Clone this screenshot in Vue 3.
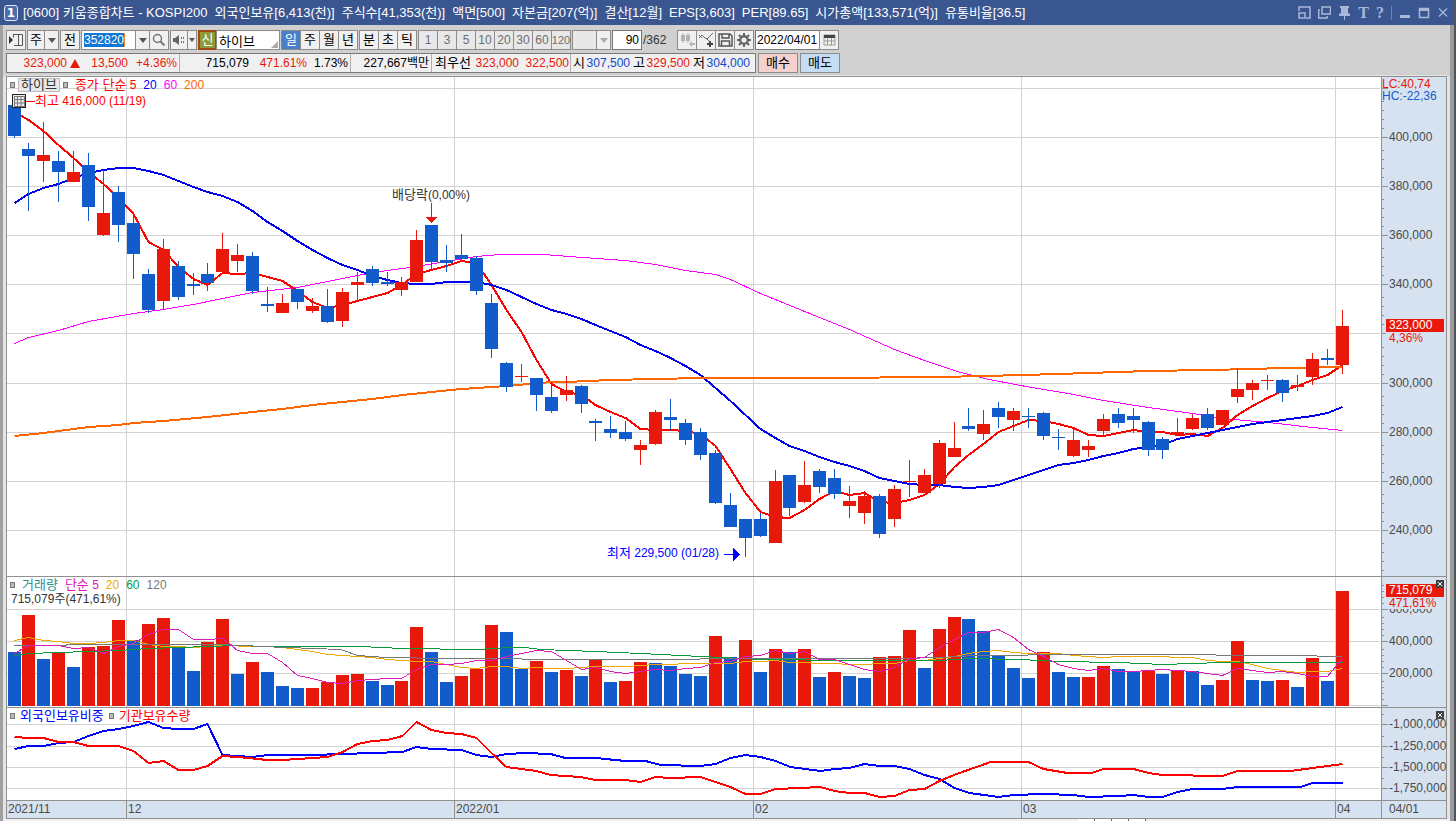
<script setup>
const N = 90
const xs = Array.from({ length: N }, (_, i) => Math.floor(14 + (i * 1328) / 89 + 0.02))

// body top, body bottom, high, low, direction
const candles = [
  [105,136,97,138,'b'],[149,156,143,211,'b'],[155,161,122,182,'r'],[161,172,151,202,'b'],[172,182,151,182,'r'],
  [165,207,153,221,'b'],[213,235,170,236,'r'],[192,225,186,242,'b'],[223,254,212,279,'b'],[274,310,269,313,'b'],
  [249,301,239,310,'r'],[266,297,261,300,'b'],[284,286,273,295,'b'],[274,283,263,291,'b'],[249,272,233,272,'r'],
  [255,261,244,272,'r'],[256,291,252,294,'b'],[304,306,287,312,'b'],[303,313,294,313,'r'],[289,302,289,309,'b'],
  [306,311,298,313,'r'],[306,322,289,323,'b'],[292,321,288,327,'r'],[282,285,272,300,'r'],[269,283,266,286,'b'],
  [282,284,272,286,'b'],[282,290,277,296,'r'],[240,282,230,282,'r'],[225,262,225,269,'b'],[260,263,245,272,'b'],
  [255,259,234,261,'b'],[258,291,256,295,'b'],[303,349,294,358,'b'],[363,387,362,392,'b'],[376,377,364,382,'r'],
  [378,395,378,411,'b'],[397,411,382,413,'b'],[390,395,376,401,'r'],[386,404,385,413,'b'],[421,423,419,441,'b'],
  [429,433,416,438,'b'],[432,439,421,441,'b'],[445,450,440,465,'r'],[412,444,410,445,'r'],[417,420,399,430,'b'],
  [423,440,419,445,'b'],[432,455,428,460,'b'],[453,503,450,504,'b'],[505,527,493,527,'b'],[519,538,519,557,'b'],
  [519,536,513,537,'b'],[481,543,470,543,'r'],[475,508,475,516,'b'],[485,502,461,503,'r'],[471,487,469,493,'b'],
  [478,494,469,499,'b'],[501,506,486,518,'r'],[496,513,491,524,'r'],[496,534,494,538,'b'],[489,519,485,527,'r'],
  [481,482,460,497,'r'],[475,493,469,493,'r'],[443,484,440,488,'r'],[448,457,422,457,'r'],[426,429,408,431,'b'],
  [424,434,410,440,'r'],[408,417,402,428,'b'],[411,420,408,431,'r'],[416,417,408,428,'b'],[413,436,412,440,'b'],
  [437,438,429,450,'b'],[440,456,429,457,'r'],[446,450,440,457,'r'],[419,431,414,435,'r'],[414,423,408,428,'b'],
  [416,420,408,433,'b'],[422,450,421,456,'b'],[439,450,437,459,'b'],[432,435,418,435,'r'],[418,429,414,430,'r'],
  [414,428,408,430,'b'],[410,425,410,425,'r'],[389,397,368,403,'r'],[383,390,380,400,'r'],[380,381,375,390,'r'],
  [380,393,379,402,'b'],[385,387,375,391,'r'],[359,377,353,385,'r'],[358,360,349,365,'b'],[326,365,310,374,'r'],
]

const volTops = [
  652,615,659,653,667,647,646,620,640,624,618,647,671,642,619,674,662,672,686,688,688,682,675,674,681,
  685,681,627,652,682,676,669,625,632,669,661,672,670,676,660,682,681,662,663,666,674,676,636,657,640,
  672,649,652,649,677,672,676,678,657,656,630,668,629,617,619,631,656,668,678,652,672,677,677,666,669,
  672,671,674,670,671,685,680,641,680,681,680,687,658,681,591,
]
const volUp = new Set([1,3,5,6,7,9,10,13,14,16,20,21,22,23,26,27,30,31,32,35,37,39,41,42,47,49,51,53,55,58,59,60,62,63,69,72,73,76,78,81,82,85,87,89])

const colour = (c) => (c === 'r' ? '#e8190a' : '#125bcb')
const closes = candles.map((c) => (c[4] === 'r' ? c[0] : c[1]))

function average(src, n) {
  const out = []
  for (let i = n - 1; i < src.length; i++) {
    let sum = 0
    for (let k = i - n + 1; k <= i; k++) sum += src[k]
    out.push([xs[i], sum / n])
  }
  return out
}
const toPoints = (pts, half = 0) => pts.map(([x, y]) => `${x + 0.5},${Math.round(y) + half}`).join(' ')
const parse = (s) => s.trim().split(/\s+/).map((p) => p.split(',').map(Number))

const ma5 = toPoints([...parse('14,112 28,120 43,131 58,145'), ...average(closes, 5)])
const ma20 = toPoints([
  ...parse('14,203 28,194 43,188 58,184 73,178 88,173 103,170 118,168 133,168 148,171 163,175 178,181 193,187 207,192 222,196 237,202 252,211 267,222 282,231'),
  ...average(closes, 20),
])
const ma60 = toPoints(parse('14,343 28,337 58,330 88,321 133,313 163,309 193,304 222,298 252,292 297,287 327,281 357,275 387,270 416,266 446,261 476,256 499,254 543,254 582,257 625,260 655,264 685,270 715,274 730,279 760,293 819,317 849,329 894,349 924,360 957,371 984,378 1020,385 1073,394 1103,400 1148,407 1192,413 1222,418 1268,422 1312,427 1342,430'), 0.5)
const ma200 = toPoints(parse('14,436 43,433 73,429 88,427 118,425 133,423 163,421 207,417 252,412 282,409 312,405 342,402 372,399 402,395 431,392 461,389 506,386 551,382 566,382 610,380 655,379 700,378 820,378 939,377 984,376 1058,374 1148,371 1207,370 1252,369 1282,368 1342,367'))

const volMa5 = toPoints([...parse('14,654 28,646 43,646 58,646'), ...average(volTops, 5)], -0.5)
const volMa20 = toPoints([
  ...parse('14,641 28,638 43,641 58,642 73,644 88,644 103,643 118,641 133,641 148,645 163,647 178,647 193,648 207,647 222,646 252,647 267,647 282,648'),
  ...average(volTops, 20),
], -0.5)
const volMa60 = toPoints(parse('14,656 28,654 58,653 88,652 118,651 148,649 178,648 207,647 237,646 267,647 360,647 402,649 476,650 510,648 525,648 540,650 595,652 640,654 700,657 760,660 850,661 939,661 970,659 1020,660 1058,662 1118,663 1162,665 1222,663 1342,663'), -0.5)
const volMa120 = toPoints(parse('14,646 118,645 222,645 260,647 340,650 357,656 386,658 446,659 595,660 655,660 745,659 900,659 939,658 975,656 1080,655 1140,655 1290,656 1342,657'), -0.5)

const foreign = toPoints(parse('14,749 28,746 43,746 58,743 73,742 88,736 103,731 118,729 133,726 148,722 163,728 178,729 193,729 207,724 222,755 237,756 252,757 267,755 312,755 342,754 402,752 416,747 431,749 461,750 476,755 491,757 506,754 525,753 550,754 565,758 595,758 625,761 645,761 660,765 700,766 715,764 730,758 745,755 760,757 775,761 790,767 820,771 834,769 849,768 864,764 879,766 894,766 909,769 924,775 939,779 954,788 969,793 998,797 1013,795 1043,794 1073,795 1088,797 1118,796 1133,795 1148,797 1162,797 1177,792 1192,789 1222,789 1237,787 1300,787 1312,783 1342,783'))
const institution = toPoints(parse('14,737 28,738 43,738 58,742 73,742 88,746 118,746 133,751 148,763 163,761 178,770 193,770 207,766 222,756 237,757 267,760 282,760 297,759 327,757 342,752 357,744 372,741 387,740 402,736 416,722 431,730 446,733 461,734 476,738 491,753 506,767 521,769 536,771 550,775 580,777 595,780 625,780 640,782 655,777 670,778 700,777 715,782 730,787 745,794 760,794 775,789 800,788 820,787 834,791 849,793 864,793 879,797 894,796 909,790 924,789 939,781 956,774 979,766 990,762 1028,762 1043,769 1067,773 1091,773 1103,769 1133,769 1148,773 1162,775 1222,776 1237,771 1290,771 1312,768 1342,764'))

const monthLines = [126, 454, 753, 1021, 1335]
const months = [[8, '2021/11'], [127, '12'], [455, '2022/01'], [754, '02'], [1022, '03'], [1336, '04']]
const left = (x) => ({ left: `${((x - 7) / 1374) * 100}%` })

const mainGrid = [88, 137, 186, 235, 284, 333, 383, 432, 481, 530]
const mainLabels = [[137, '400,000'], [186, '380,000'], [235, '360,000'], [284, '340,000'], [383, '300,000'], [432, '280,000'], [481, '260,000'], [530, '240,000']]
const volGrid = [609, 641, 673, 705]
const volLabels = [[609, '600,000'], [641, '400,000'], [673, '200,000']]
const holdGrid = [724, 746, 767, 788]
const holdLabels = [[724, '-1,000,000'], [746, '-1,250,000'], [767, '-1,500,000'], [788, '-1,750,000']]
const top = (y, start, height) => ({ top: `${((y - start) / height) * 100}%` })

const mainMinor = [...mainGrid, 579].flatMap((y) => [9, 18, 27, 36].map((d) => y - d)).filter((y) => y > 98 && y < 575)
const volMinor = volGrid.flatMap((y) => [6, 12, 18, 24].map((d) => y - d))
const holdMinor = [714, 736, 757, 778]

const periods = [['일', true], ['주'], ['월'], ['년']]
const intraday = ['분', '초', '틱']
const ticks = ['1', '3', '5', '10', '20', '30', '60', '120']
const titleParts = ['[0600] 키움종합차트 - KOSPI200', '외국인보유[6,413(천)]', '주식수[41,353(천)]', '액면[500]', '자본금[207(억)]', '결산[12월]', 'EPS[3,603]', 'PER[89.65]', '시가총액[133,571(억)]', '유통비율[36.5]']
</script>

<template>
  <div class="window">
    <header class="titlebar">
      <span class="badge">1</span>
      <h1 class="title"><span v-for="t in titleParts" :key="t">{{ t }}</span></h1>
      <div class="winbtns">
        <button aria-label="dock"><svg width="13" height="13" viewBox="0 0 13 13"><path d="M1 5V1h11v11H8M1 7h6v5H1z" /></svg></button>
        <button aria-label="cascade"><svg width="13" height="13" viewBox="0 0 13 13"><path d="M4 1h8.500v7H4zM2 4H.7v8H9v-2" /></svg></button>
        <button aria-label="pin"><svg width="13" height="14" viewBox="0 0 13 14"><path class="f" d="M2 0h9v2H10v5l2 1v2H7v4H6v-4H1V8l2-1V2H2z" /></svg></button>
        <button class="serif">T</button>
        <button class="serif">?</button>
        <i class="sep"></i>
        <button aria-label="minimize"><svg width="12" height="13" viewBox="0 0 12 13"><path class="f" d="M1 9h10v3H1z" /></svg></button>
        <button aria-label="maximize"><svg width="12" height="13" viewBox="0 0 12 13"><path d="M1.500 2.500h9v9h-9z" /><path class="f" d="M1 2h10v3H1z" /></svg></button>
        <button aria-label="close"><svg width="12" height="13" viewBox="0 0 12 13"><path d="M2 2.500l8 8M10 2.500l-8 8" stroke-width="1.200" /></svg></button>
      </div>
    </header>

    <div class="body">
      <div class="toolbar">
        <button class="btn" aria-label="panel"><svg width="16" height="14" viewBox="0 0 16 14"><path d="M1 3v8l4-4z" fill="#333" /><path d="M5 1.500h9.500v11H6M5.500 1.500v3M10.500 1.500v11" fill="none" stroke="#555" /></svg></button>
        <div class="group"><button class="btn w18">주</button><button class="btn w15" aria-label="menu"><i class="caret"></i></button></div>
        <button class="btn">전</button>
        <div class="group">
          <label class="code"><span class="picked">352820</span><input aria-label="종목코드" /></label>
          <button class="btn w15" aria-label="codes"><i class="caret"></i></button>
          <button class="btn" aria-label="search"><svg width="14" height="14" viewBox="0 0 14 14"><circle cx="5.500" cy="5.500" r="4" fill="none" stroke="#777" stroke-width="1.500" /><path d="M8.500 8.500l4 4" stroke="#777" stroke-width="2" /></svg></button>
        </div>
        <div class="group">
          <button class="btn w18" aria-label="sound"><svg width="14" height="12" viewBox="0 0 14 12"><path d="M1 4h2l4-3v10L3 8H1z" fill="#666" /><path d="M9 3h1v2H9zM9 7h1v2H9zM11 3h1v2h-1zM11 7h1v2h-1z" fill="#777" /></svg></button>
          <button class="btn w10" aria-label="sound menu"><i class="caret small"></i></button>
        </div>
        <div class="group name"><button class="credit">신</button><input class="stock" value="하이브" aria-label="종목명" /><i class="corner"></i></div>
        <div class="group"><button v-for="p in periods" :key="p[0]" class="btn" :class="{ on: p[1] }">{{ p[0] }}</button></div>
        <div class="group"><button v-for="p in intraday" :key="p" class="btn">{{ p }}</button></div>
        <div class="group"><button v-for="t in ticks" :key="t" class="btn dim">{{ t }}</button></div>
        <div class="group"><span class="combo"></span><button class="btn w15" aria-label="interval"><i class="caret light"></i></button></div>
        <input class="count" value="90" aria-label="봉 개수" />
        <span class="total">/362</span>
        <div class="group">
          <button class="btn" aria-label="candles"><svg width="15" height="14" viewBox="0 0 15 14"><path d="M1 2h4v6H1zM6 2h4v6H6zM2.500 0h1v10h-1zM7.500 0h1v10h-1zM11 10h4v2h-4zM9 11l3-3v6z" fill="#b4b4b4" /></svg></button>
          <button class="btn" aria-label="add indicator"><svg width="15" height="14" viewBox="0 0 15 14"><path d="M0 5l3-3 3 3 2 1 6-6M0 2l3 3M7 5l3 3" fill="none" stroke="#666" /><path d="M10 8h2v2h2v2h-2v2h-2v-2H8v-2h2z" fill="#444" /></svg></button>
          <button class="btn" aria-label="save"><svg width="15" height="14" viewBox="0 0 15 14"><path d="M1 1h11l2 2v10H1zM4 1v4h7V1M3.500 13V8h8v5" fill="none" stroke="#555" stroke-width="1.500" /></svg></button>
          <button class="btn" aria-label="settings"><svg width="14" height="14" viewBox="0 0 14 14"><circle cx="7" cy="7" r="3.800" fill="none" stroke="#666" stroke-width="2.400" /><path d="M7 0v3M7 11v3M0 7h3M11 7h3M2 2l2 2M10 10l2 2M12 2l-2 2M4 10l-2 2" stroke="#666" stroke-width="2" /></svg></button>
        </div>
        <div class="group"><input class="date" value="2022/04/01" aria-label="날짜" /><button class="btn" aria-label="calendar"><svg width="13" height="12" viewBox="0 0 13 12"><path d="M1 1h11v10H1zM1 7h11M4.500 4v7M8.500 4v7" fill="none" stroke="#999" /><path d="M1 1h11v3H1z" fill="#444" /></svg></button></div>
      </div>

      <div class="quote">
        <div class="quotebox">
          <span class="c1 red">323,000</span><i class="up"></i><span class="c2 red">13,500</span><span class="c3 red">+4.36%</span>
          <span class="c4 div">715,079</span><span class="c5 red">471.61%</span><span class="c6">1.73%</span>
          <span class="c7 div">227,667백만</span>
          <span class="c8 div ko">최우선</span><span class="c9 red">323,000</span><span class="c10 red">322,500</span>
          <span class="c11 div ko">시</span><span class="c12 blue">307,500</span><span class="c11 ko">고</span><span class="c12 red">329,500</span><span class="c11 ko">저</span><span class="c12 blue">304,000</span>
        </div>
        <button class="trade buy">매수</button>
        <button class="trade sell">매도</button>
      </div>

      <main class="chart">
        <section class="plot">
          <svg viewBox="7 77 1374 499" preserveAspectRatio="none" shape-rendering="crispEdges">
            <g fill="#d3d3d3">
              <rect v-for="y in mainGrid" :key="y" x="7" :y="y" width="1373" height="1" />
              <rect v-for="x in monthLines" :key="x" :x="x" y="77" width="1" height="499" />
            </g>
            <g fill="none" stroke-width="2">
              <polyline :points="ma60" stroke="#f0f" stroke-width="1" />
              <polyline :points="ma5" stroke="#f00" />
              <polyline :points="ma20" stroke="#00e" />
              <polyline :points="ma200" stroke="#f60" />
            </g>
            <g v-for="(c, i) in candles" :key="i" :fill="colour(c[4])">
              <rect :x="xs[i]" :y="c[2]" width="1" :height="c[3] - c[2]" />
              <rect :x="xs[i] - 6" :y="c[0]" width="13" :height="c[1] - c[0]" />
            </g>
            <path d="M431 203h1v14h5l-5.500 6-5.500-6h5z" fill="#e8190a" />
            <path d="M724 554h9v-6l7 6.500-7 6.500v-6h-9z" fill="#00f" />
            <path d="M26 101h9v1h-9z" fill="#f00" />
          </svg>
          <div class="legend">
            <i class="dot"></i><button class="tag">하이브</button><i class="dot"></i>
            <span class="pure"><span class="ko">종가 단순</span> 5</span><span class="navy">20</span><span class="pink">60</span><span class="orange">200</span>
          </div>
          <div class="legend second"><button class="gridicon" aria-label="표"><svg width="11" height="11" viewBox="0 0 11 11"><path d="M.5.5h10v10H.5zM0 3.500h11M0 7h11M3.500 0v11M7 0v11" fill="none" stroke="#777" /></svg></button><span class="pure"><span class="ko">최고</span> 416,000 (11/19)</span></div>
          <span class="note" :style="{ ...left(392), ...top(188, 77, 499) }"><span class="ko">배당락</span>(0,00%)</span>
          <span class="note deep" :style="{ ...left(607), ...top(546, 77, 499) }"><span class="ko">최저</span> 229,500 (01/28)</span>
        </section>
        <aside class="scale">
          <i v-for="y in mainGrid" :key="y" class="tick" :style="top(y, 77, 499)"></i>
          <i v-for="y in mainMinor" :key="'m' + y" class="tick minor" :style="top(y, 77, 499)"></i>
          <span v-for="l in mainLabels" :key="l[1]" class="lab" :style="top(l[0], 77, 499)">{{ l[1] }}</span>
          <div class="extremes"><span class="red">LC:40,74</span><span class="blue2">HC:-22,36</span></div>
          <div class="price" :style="top(319, 77, 499)"><b>323,000</b><span>4,36%</span></div>
        </aside>

        <section class="plot">
          <svg viewBox="7 577 1374 130" preserveAspectRatio="none" shape-rendering="crispEdges">
            <g fill="#d3d3d3">
              <rect v-for="y in volGrid" :key="y" x="7" :y="y" width="1373" height="1" />
              <rect v-for="x in monthLines" :key="x" :x="x" y="577" width="1" height="130" />
            </g>
            <rect v-for="(v, i) in volTops" :key="i" :x="xs[i] - 6" :y="v" width="13" :height="706 - v" :fill="colour(volUp.has(i) ? 'r' : 'b')" />
            <g fill="none" stroke-width="1">
              <polyline :points="volMa20" stroke="#f0a800" />
              <polyline :points="volMa60" stroke="#0a9a3c" />
              <polyline :points="volMa120" stroke="#777" />
              <polyline :points="volMa5" stroke="#e01ab8" />
            </g>
          </svg>
          <div class="legend"><i class="dot"></i><span class="teal ko">거래량</span><span class="mag"><span class="ko">단순</span> 5</span><span class="gold">20</span><span class="green">60</span><span class="grey">120</span></div>
          <div class="legend volume"><span>715,079주(471,61%)</span></div>
        </section>
        <aside class="scale">
          <i v-for="y in volGrid" :key="y" class="tick" :style="top(y, 577, 130)"></i>
          <i v-for="y in volMinor" :key="'m' + y" class="tick minor" :style="top(y, 577, 130)"></i>
          <span v-for="l in volLabels" :key="l[1]" class="lab" :style="top(l[0], 577, 130)">{{ l[1] }}</span>
          <div class="price" :style="top(584, 577, 130)"><b>715,079</b><span>471,61%</span></div>
          <button class="shut" aria-label="닫기"><svg width="8" height="8" viewBox="0 0 8 8"><path d="M2 2l4 4M6 2L2 6" stroke="#fff" /></svg></button>
        </aside>

        <section class="plot">
          <svg viewBox="7 708 1374 92" preserveAspectRatio="none" shape-rendering="crispEdges">
            <g fill="#d3d3d3">
              <rect v-for="y in holdGrid" :key="y" x="7" :y="y" width="1373" height="1" />
              <rect v-for="x in monthLines" :key="x" :x="x" y="708" width="1" height="92" />
            </g>
            <g fill="none" stroke-width="2">
              <polyline :points="foreign" stroke="#00f" />
              <polyline :points="institution" stroke="#f00" />
            </g>
          </svg>
          <div class="legend ko tight"><i class="dot"></i><span class="deep">외국인보유비중</span><i class="dot"></i><span class="pure">기관보유수량</span></div>
        </section>
        <aside class="scale">
          <i v-for="y in holdGrid" :key="y" class="tick" :style="top(y, 708, 92)"></i>
          <i v-for="y in holdMinor" :key="'m' + y" class="tick minor" :style="top(y, 708, 92)"></i>
          <span v-for="l in holdLabels" :key="l[1]" class="lab" :style="top(l[0], 708, 92)">{{ l[1] }}</span>
          <button class="shut" aria-label="닫기"><svg width="8" height="8" viewBox="0 0 8 8"><path d="M2 2l4 4M6 2L2 6" stroke="#fff" /></svg></button>
        </aside>

        <div class="months">
          <span v-for="m in months" :key="m[0]" :class="{ first: m[0] === 8 }" :style="left(m[0] - 1)">{{ m[1] }}</span>
        </div>
        <div class="today">04/01</div>
      </main>
      <footer class="tabs"><i></i><i></i><i></i><i></i></footer>
    </div>
  </div>
</template>

<style>
html, body { margin: 0; background: #f0f0f0; }
</style>

<style scoped>
* { box-sizing: border-box; }
.window {
  display: flex; flex-direction: column; min-height: 100vh; overflow: hidden;
  border-right: 2px solid #50555c;
  font-family: "Liberation Sans", "Noto Sans CJK KR", sans-serif;
  font-size: 12px; line-height: 14px; color: #000; white-space: nowrap;
}
button, input { font: inherit; color: inherit; margin: 0; padding: 0; border: 0; background: none; border-radius: 0; min-width: 0; }
i { display: block; flex: none; }
.ko { font-size: 13px; }
.titlebar { display: flex; align-items: center; height: 25px; padding: 0 5px 0 4px; background: #3a5691; color: #fff; }
.badge { width: 14px; height: 16px; border: 1px solid #dfe6f5; border-radius: 3px; background: #4f6cab; text-align: center; font: bold 12px/14px "DejaVu Sans", sans-serif; }
.title { display: flex; gap: 7px; flex: 1; margin: 0 0 0 5px; font-size: 13px; font-weight: normal; }
.winbtns { display: flex; align-items: center; gap: 7px; color: #a9b8d9; }
.winbtns button { display: block; height: 14px; }
.winbtns svg { display: block; fill: none; stroke: #a9b8d9; stroke-width: 1.500; }
.winbtns .f { fill: #a9b8d9; stroke: none; }
.winbtns .serif { font: bold 16px/14px "Liberation Serif", serif; }
.sep { width: 1px; height: 14px; background: #7383a8; }

.body { flex: 1; display: flex; flex-direction: column; padding: 0 3px; background: #d0d0d0; border-left: 3px solid #a0a0a0; border-right: 4px solid #9b9b9b; }
.toolbar { display: flex; gap: 1px; height: 20px; margin: 5px 0 3px; }
.group { display: flex; }
.group > * + * { margin-left: -1px; }
.btn { width: 20px; height: 20px; display: flex; align-items: center; justify-content: center; border: 1px solid #8c8c8c; background: #f0f0f0; flex: none; font-size: 13px; }
.w10 { width: 10px; } .w15 { width: 15px; } .w18 { width: 18px; }
.on { background: #4a80c8; color: #fff; }
.dim { color: #6e6e6e; background: #e8e8e8; font-size: 12px; }
.group > .dim:last-child { font-size: 11px; }
.caret { border: 4px solid transparent; border-top: 5px solid #555; border-bottom: 0; }
.caret.small { border-width: 4px 3px 0; }
.caret.light { border-top-color: #aaa; }
.code { display: flex; align-items: center; width: 55px; height: 20px; padding-left: 2px; border: 1px solid #8c8c8c; background: #fff; }
.code input { width: 10px; flex: 1; }
.picked { background: #0f78d4; color: #fff; border-right: 1px solid #f08030; }
.name { position: relative; width: 82px; }
.credit { width: 19px; height: 20px; border: 2px solid #a04c10; background: #8c9a38; color: #fff; line-height: 14px; font-size: 13px; flex: none; }
.stock { flex: 1; height: 20px; border: 1px solid #8c8c8c; background: #fff; padding-left: 2px; font-size: 13px; }
.corner { position: absolute; right: 2px; bottom: 2px; border-left: 7px solid transparent; border-bottom: 7px solid #aaa; }
.combo { width: 25px; height: 20px; border: 1px solid #8c8c8c; background: #e8e8e8; }
.count { width: 30px; height: 20px; border: 1px solid #777; background: #fff; text-align: right; padding-right: 2px; }
.total { width: 33px; line-height: 20px; color: #333; }
.date { width: 65px; height: 20px; border: 1px solid #777; background: #fff; padding-left: 1px; }

.quote { display: flex; gap: 2px; height: 20px; margin-bottom: 3px; }
.quotebox { display: flex; width: 750px; border: 1px solid #7a7a7a; background: #f0f0f0; line-height: 18px; text-align: right; }
.quotebox span { flex: none; }
.div { border-left: 1px solid #b0b0b0; }
.c1 { width: 60px; } .c2 { width: 48px; } .c3 { width: 51px; padding-right: 2px; }
.c4 { width: 70px; } .c5 { width: 58px; } .c6 { width: 43px; padding-right: 2px; }
.c7 { width: 81px; padding-right: 2px; } .c8 { width: 40px; } .c9 { width: 48px; } .c10 { width: 51px; padding-right: 1px; }
.c11 { width: 15px; } .c12 { width: 45px; }
.up { align-self: center; margin-left: 3px; border: 5px solid transparent; border-top: 0; border-bottom: 9px solid #e8190a; }
.trade { width: 40px; border: 1px solid #8c8c8c; font-size: 13px; }
.buy { background: #f6d0cc; } .sell { background: #c5ddf4; }
.red { color: #e8190a; } .blue { color: #1048c8; } .blue2 { color: #125bcb; }

.chart {
  flex: 1; display: grid; grid-template-columns: 1fr 65px; grid-template-rows: 500fr 131fr 93fr 17fr;
  border: 1px solid #909090; background: #fff;
  box-shadow: -3px 0 #e4e4e4, 3px 0 #e4e4e4, 0 -1px #e4e4e4;
}
.plot { position: relative; border-bottom: 1px solid #909090; min-height: 0; }
.plot svg { display: block; }
.plot > svg { position: absolute; inset: 0; width: 100%; height: 100%; }
.legend { position: relative; display: flex; align-items: center; gap: 7px; height: 14px; margin: 1px 0 0 3px; color: #333; }
.legend.second { gap: 9px; margin: 2px 0 0 5px; }
.legend.volume { margin: 0 0 0 4px; }
.legend.tight { gap: 5px; }
.dot { width: 5px; height: 6px; border: 1px solid #777; background: #bbb; }
.tag { height: 14px; margin: 0 -4px; padding: 0 2px; border: 1px solid #bbb; background: #e8e8e8; line-height: 12px; font-size: 13px; }
.gridicon { display: flex; align-items: center; justify-content: center; width: 14px; height: 14px; border: 1px solid #222; background: #eee; }
.note { position: absolute; color: #333; }
.pure { color: #f00; } .navy, .deep { color: #00f; } .pink { color: #f0f; } .orange { color: #f60; }
.teal { color: #2a9090; } .mag { color: #e01ab8; } .gold { color: #f0a800; } .green { color: #0a9a3c; } .grey { color: #777; }
.scale { position: relative; border-left: 1px solid #909090; border-bottom: 1px solid #909090; background: #d7e2f0; color: #4a4a4a; }
.tick { position: absolute; left: 0; width: 6px; height: 1px; background: #909090; }
.minor { width: 2px; }
.lab { position: absolute; left: 7px; margin-top: -7px; }
.extremes { position: absolute; top: 1px; left: 0; display: flex; flex-direction: column; line-height: 12px; }
.price { position: absolute; left: 4px; right: 2px; display: flex; flex-direction: column; line-height: 12px; color: #e8190a; background: #d7e2f0; }
.price b { padding-left: 3px; height: 13px; font-weight: normal; background: #e8190a; color: #fff; }
.price span { padding-left: 3px; height: 12px; }
.shut { position: absolute; right: 2px; top: 3px; width: 8px; height: 8px; background: #444; }
.shut svg { display: block; }
.months { position: relative; background: #d7e2f0; }
.months span { position: absolute; top: 0; bottom: 0; line-height: 16px; padding-left: 1px; border-left: 1px solid #909090; color: #4a4a4a; }
.months .first { border: 0; }
.today { border-left: 1px solid #909090; background: #d7e2f0; padding-left: 7px; color: #4a4a4a; line-height: 16px; }
.tabs { display: flex; justify-content: flex-end; height: 2px; margin: 0 -3px; padding-right: 304px; background: #f0f0f0; }
.tabs i { width: 17px; border-right: 1px solid #666; background: #fff; }
</style>
